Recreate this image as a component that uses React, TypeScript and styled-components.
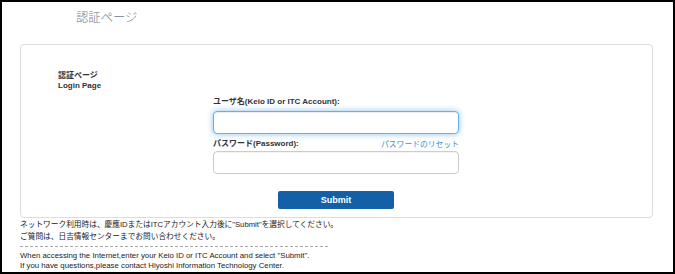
import styled, { createGlobalStyle } from "styled-components";

const GlobalStyle = createGlobalStyle`
  html, body {
    margin: 0;
    padding: 0;
    background: #ffffff;
  }
  * {
    box-sizing: border-box;
  }
`;

const App = () => {
  return (
    <>
      <GlobalStyle />
      <Frame>
        <Title>認証ページ</Title>
        <Panel>
          <Heading>
            <div>認証ページ</div>
            <div>Login Page</div>
          </Heading>
          <Form onSubmit={(e) => e.preventDefault()}>
            <Label>ユーザ名(Keio ID or ITC Account):</Label>
            <Input type="text" focused />
            <LabelRow>
              <Label>パスワード(Password):</Label>
              <ResetLink href="#">パスワードのリセット</ResetLink>
            </LabelRow>
            <Input type="password" />
            <ButtonRow>
              <SubmitButton type="submit">Submit</SubmitButton>
            </ButtonRow>
          </Form>
        </Panel>
        <Notice>
          <JpLine>
            ネットワーク利用時は、慶應IDまたはITCアカウント入力後に"Submit"を選択してください。
          </JpLine>
          <JpLine>ご質問は、日吉情報センターまでお問い合わせください。</JpLine>
          <Divider />
          <EnLine>
            When accessing the Internet,enter your Keio ID or ITC Account and
            select "Submit".
          </EnLine>
          <EnLine>
            If you have questions,please contact Hiyoshi Information Technology
            Center.
          </EnLine>
        </Notice>
      </Frame>
    </>
  );
};

export default App;

const Frame = styled.div`
  width: 675px;
  height: 274px;
  border: 2px solid #000000;
  padding: 0 18px;
  font-family: "Liberation Sans", Arial, "Noto Sans CJK JP", sans-serif;
  color: #333333;
  overflow: hidden;
`;

const Title = styled.div`
  margin-top: 7px;
  padding-left: 56px;
  font-family: "Noto Sans CJK JP", sans-serif;
  font-size: 12.3px;
  line-height: 16px;
  font-weight: 300;
  color: #6b7b92;
`;

const Panel = styled.div`
  width: 633px;
  margin-top: 19px;
  border: 1px solid #dddddd;
  border-radius: 4px;
  padding: 26px 0 8px 37px;
`;

const Heading = styled.div`
  font-size: 8px;
  line-height: 10px;
  font-weight: bold;
  color: #333333;
`;

const Form = styled.form`
  width: 246px;
  margin: 6px 0 0 155px;
  display: flex;
  flex-direction: column;
`;

const Label = styled.label`
  font-size: 8px;
  line-height: 10px;
  font-weight: bold;
  color: #333333;
`;

const LabelRow = styled.div`
  display: flex;
  justify-content: space-between;
  align-items: center;
  margin: 5px 0 2px;
`;

const ResetLink = styled.a`
  font-family: "Noto Sans CJK JP", sans-serif;
  font-size: 7.8px;
  line-height: 10px;
  color: #4a8cc4;
  text-decoration: none;
`;

const Input = styled.input<{ focused?: boolean }>`
  width: 100%;
  height: 23px;
  margin-top: ${({ focused }) => (focused ? "4px" : "0")};
  border: 1px solid ${({ focused }) => (focused ? "#66afe9" : "#cccccc")};
  border-radius: 4px;
  box-shadow: ${({ focused }) =>
    focused
      ? "inset 0 1px 1px rgba(0,0,0,.075), 0 0 6px rgba(102,175,233,.75)"
      : "inset 0 1px 1px rgba(0,0,0,.05)"};
  outline: none;
  background: #ffffff;
`;

const ButtonRow = styled.div`
  display: flex;
  justify-content: center;
  margin-top: 17px;
`;

const SubmitButton = styled.button`
  width: 116px;
  height: 18px;
  border: none;
  border-radius: 2px;
  background: #1460a6;
  color: #ffffff;
  font-family: "Liberation Sans", Arial, sans-serif;
  font-size: 9px;
  font-weight: bold;
  padding: 0;
  cursor: pointer;
`;

const Notice = styled.div`
  padding-top: 1px;
`;

const JpLine = styled.div`
  font-family: "Liberation Sans", "Noto Sans CJK JP", sans-serif;
  font-size: 7.7px;
  line-height: 12px;
  color: #222222;
  white-space: nowrap;
`;

const Divider = styled.div`
  width: 308px;
  margin: 3px 0 4px;
  border-top: 1px dashed #a8a8a8;
`;

const EnLine = styled.div`
  font-size: 7.8px;
  line-height: 9.5px;
  color: #222222;
  white-space: nowrap;
`;
